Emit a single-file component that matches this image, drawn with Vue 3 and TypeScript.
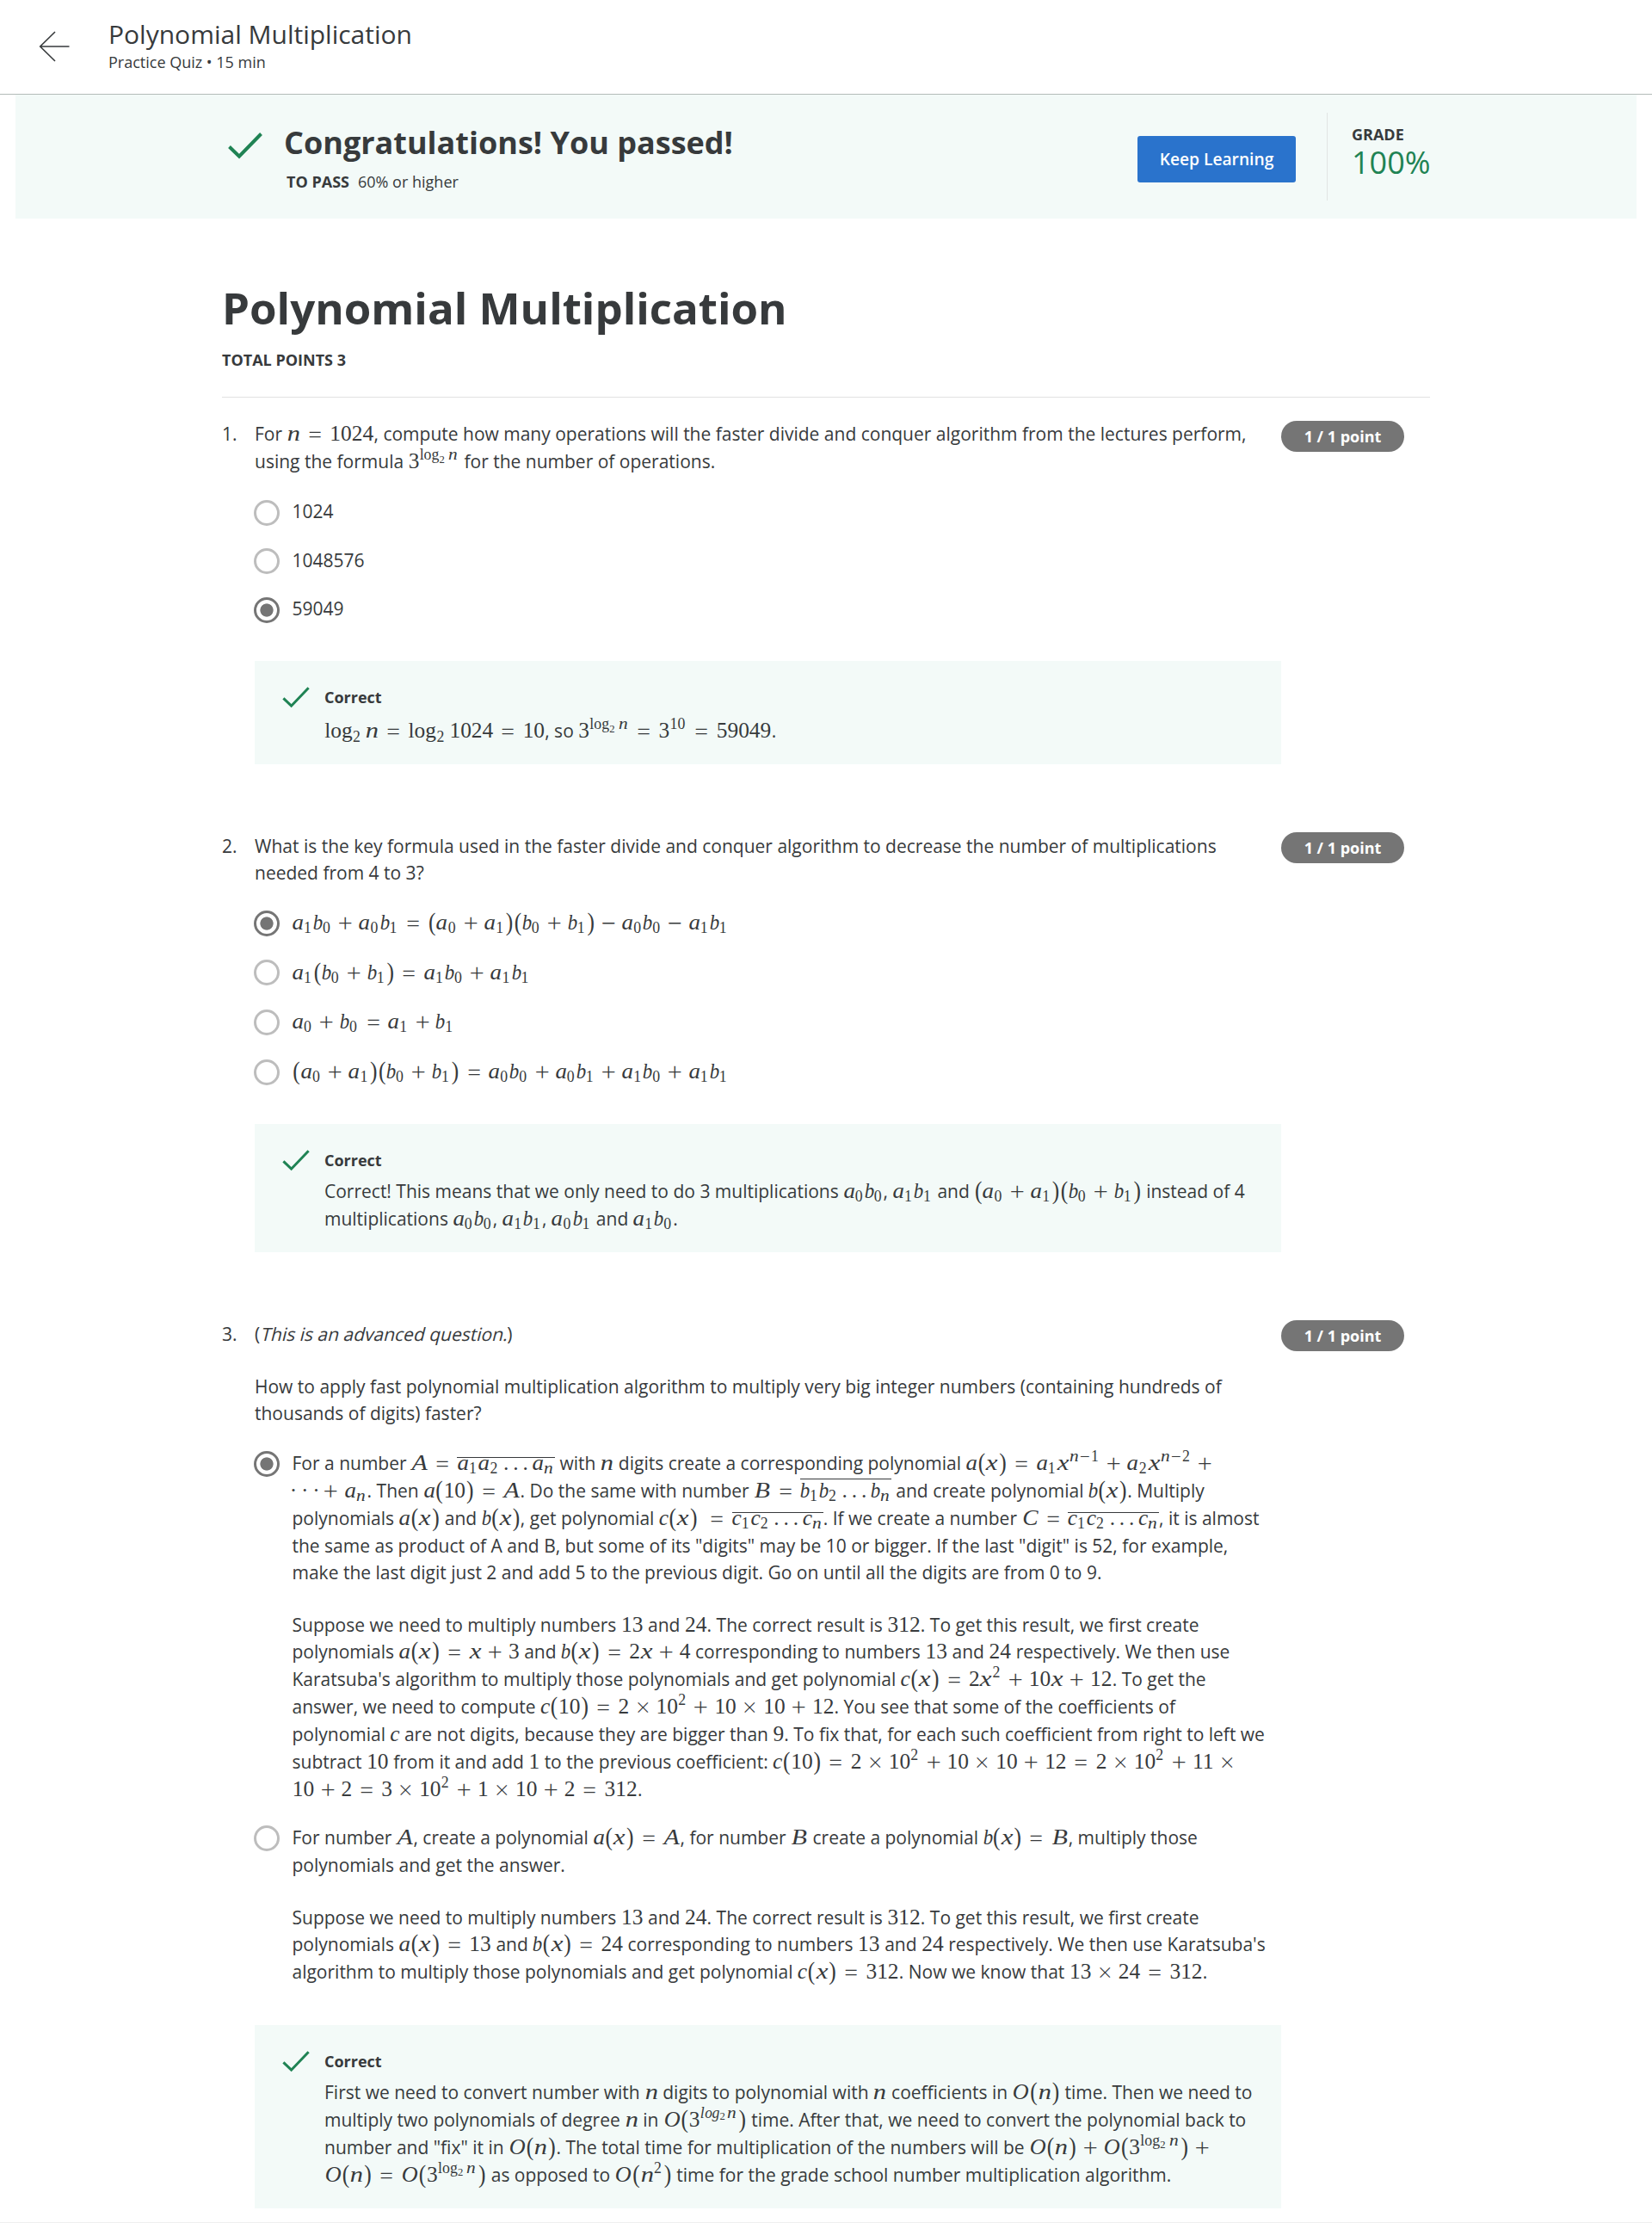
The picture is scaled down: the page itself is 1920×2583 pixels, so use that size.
<script setup lang="ts">
interface Atom {
  t: string
  kind: string
  w: number
  scale: number
  size: number
  raise: number
  ml: number
  mr: number
}
interface Segment {
  type: 'text' | 'em' | 'math' | 'bar'
  text: string
  high: boolean
  atoms: Atom[]
}
interface Line {
  tall: boolean
  segments: Segment[]
}
type Block = Line[]
interface Option {
  checked: boolean
  body: Block[]
}
interface Question {
  id: number
  kind: string
  prompt: Block[]
  options: Option[]
  feedback: Block[]
}

// [advance width, horizontal stretch] of the math letters, in em
const letters: Record<string, [number, number]> = {
  a: [0.529, 1.06], b: [0.429, 0.9], c: [0.433, 1], n: [0.615, 1.2], x: [0.575, 1.22],
  A: [0.77, 1.18], B: [0.79, 1.17], C: [0.77, 1.08], O: [0.785, 1.03],
  l: [0.298, 1], o: [0.485, 0.97], g: [0.5, 1],
}

function parseMath(src: string, size = 1, raise = 0): Atom[] {
  const out: Atom[] = []
  let i = 0
  const push = (t: string, kind: string, w: number, scale = 1, gap = 0) => {
    out.push({ t, kind, w, scale, size, raise, ml: size === 1 ? gap : 0, mr: size === 1 ? gap : 0 })
  }
  const argument = (): string => {
    if (src[i] === '{') {
      const end = src.indexOf('}', i)
      const inner = src.slice(i + 1, end)
      i = end + 1
      return inner
    }
    return src[i++]
  }
  while (i < src.length) {
    const rest = src.slice(i)
    const num = /^[0-9]+/.exec(rest)
    const ch = src[i]
    if (num) {
      push(num[0], 'num', 0.507 * num[0].length)
      i += num[0].length
    } else if (rest.startsWith('\\log')) {
      i += 4
      push('log', 'num', 1.3)
      if (src[i] === '_') {
        i++
        const small = size === 1 ? 0.7 : 0.5
        out.push(...parseMath(argument(), small, raise - (size === 1 ? 0.22 : 0.145)))
      }
      out[out.length - 1].mr = ((0.06 + 0.1667) * size) / out[out.length - 1].size
    } else if (rest.startsWith('\\ldots')) {
      i += 6
      push('...', 'dots', 1.167, 1, 0.1667)
    } else if (rest.startsWith('\\cdots')) {
      i += 6
      push('···', 'dots', 1.167)
    } else if (ch === '_' || ch === '^') {
      i++
      const small = size === 1 ? 0.7 : 0.5
      const shift = ch === '^' ? 0.39 : size === 1 ? -0.15 : -0.1
      const inner = parseMath(argument(), small, raise + shift)
      inner[inner.length - 1].mr = 0.08 / small
      out.push(...inner)
    } else if (ch === '=') {
      i++
      push('=', 'eq', 0.778, 1, 0.2778)
    } else if (ch === '+' || ch === '-' || ch === '*') {
      i++
      push(ch === '+' ? '+' : ch === '-' ? '−' : '×', ch === '*' ? 'times' : 'bin', 0.778, 1, 0.2222)
      if (out.length === 1) out[0].ml = 0
    } else if (ch === '(' || ch === ')') {
      i++
      push(ch, 'paren', 0.389)
    } else {
      i++
      const m = letters[ch] ?? [0.5, 1]
      push(ch, 'var', m[0], m[1])
    }
  }
  return out
}

// $…$ math, |…| overlined math, ~…~ emphasis; a leading ! marks a tall line
function line(src: string): Line {
  const tall = src[0] === '!'
  const segments = (tall ? src.slice(1) : src)
    .split(/(\$[^$]*\$|\|[^|]*\||~[^~]*~)/)
    .filter((p) => p !== '')
    .map((p): Segment => {
      const inner = p.slice(1, -1)
      if (p[0] === '$') return { type: 'math', text: '', high: false, atoms: parseMath(inner) }
      if (p[0] === '|') return { type: 'bar', text: '', high: inner.includes('b'), atoms: parseMath(inner) }
      if (p[0] === '~') return { type: 'em', text: inner, high: false, atoms: [] }
      return { type: 'text', text: p, high: false, atoms: [] }
    })
  return { tall, segments }
}
const block = (...rows: string[]): Block => rows.map(line)

const questions: Question[] = [
  {
    id: 1,
    kind: 'plain',
    prompt: [
      block(
        '!For $n=1024$, compute how many operations will the faster divide and conquer algorithm from the lectures perform,',
        '!using the formula $3^{\\log_2n}$ for the number of operations.',
      ),
    ],
    options: [
      { checked: false, body: [block('1024')] },
      { checked: false, body: [block('1048576')] },
      { checked: true, body: [block('59049')] },
    ],
    feedback: [block('!$\\log_2n=\\log_21024=10$, so $3^{\\log_2n}=3^{10}=59049$.')],
  },
  {
    id: 2,
    kind: 'formula',
    prompt: [
      block(
        'What is the key formula used in the faster divide and conquer algorithm to decrease the number of multiplications',
        'needed from 4 to 3?',
      ),
    ],
    options: [
      { checked: true, body: [block('$a_1b_0+a_0b_1=(a_0+a_1)(b_0+b_1)-a_0b_0-a_1b_1$')] },
      { checked: false, body: [block('$a_1(b_0+b_1)=a_1b_0+a_1b_1$')] },
      { checked: false, body: [block('$a_0+b_0=a_1+b_1$')] },
      { checked: false, body: [block('$(a_0+a_1)(b_0+b_1)=a_0b_0+a_0b_1+a_1b_0+a_1b_1$')] },
    ],
    feedback: [
      block(
        '!Correct! This means that we only need to do 3 multiplications $a_0b_0$, $a_1b_1$ and $(a_0+a_1)(b_0+b_1)$ instead of 4',
        '!multiplications $a_0b_0$, $a_1b_1$, $a_0b_1$ and $a_1b_0$.',
      ),
    ],
  },
  {
    id: 3,
    kind: 'prose',
    prompt: [
      block('(~This is an advanced question.~)'),
      block(
        'How to apply fast polynomial multiplication algorithm to multiply very big integer numbers (containing hundreds of',
        'thousands of digits) faster?',
      ),
    ],
    options: [
      {
        checked: true,
        body: [
          block(
            '!For a number $A=$|a_1a_2\\ldotsa_n| with $n$ digits create a corresponding polynomial $a(x)=a_1x^{n-1}+a_2x^{n-2}+$',
            '!$\\cdots+a_n$. Then $a(10)=A$. Do the same with number $B=$|b_1b_2\\ldotsb_n| and create polynomial $b(x)$. Multiply',
            '!polynomials $a(x)$ and $b(x)$, get polynomial $c(x)$ $=$|c_1c_2\\ldotsc_n|. If we create a number $C=$|c_1c_2\\ldotsc_n|, it is almost',
            'the same as product of A and B, but some of its "digits" may be 10 or bigger. If the last "digit" is 52, for example,',
            'make the last digit just 2 and add 5 to the previous digit. Go on until all the digits are from 0 to 9.',
          ),
          block(
            'Suppose we need to multiply numbers $13$ and $24$. The correct result is $312$. To get this result, we first create',
            '!polynomials $a(x)=x+3$ and $b(x)=2x+4$ corresponding to numbers $13$ and $24$ respectively. We then use',
            '!Karatsuba\'s algorithm to multiply those polynomials and get polynomial $c(x)=2x^2+10x+12$. To get the',
            '!answer, we need to compute $c(10)=2*10^2+10*10+12$. You see that some of the coefficients of',
            '!polynomial $c$ are not digits, because they are bigger than $9$. To fix that, for each such coefficient from right to left we',
            '!subtract $10$ from it and add $1$ to the previous coefficient: $c(10)=2*10^2+10*10+12=2*10^2+11*$',
            '$10+2=3*10^2+1*10+2=312$.',
          ),
        ],
      },
      {
        checked: false,
        body: [
          block(
            '!For number $A$, create a polynomial $a(x)=A$, for number $B$ create a polynomial $b(x)=B$, multiply those',
            'polynomials and get the answer.',
          ),
          block(
            'Suppose we need to multiply numbers $13$ and $24$. The correct result is $312$. To get this result, we first create',
            '!polynomials $a(x)=13$ and $b(x)=24$ corresponding to numbers $13$ and $24$ respectively. We then use Karatsuba\'s',
            '!algorithm to multiply those polynomials and get polynomial $c(x)=312$. Now we know that $13*24=312$.',
          ),
        ],
      },
    ],
    feedback: [
      block(
        '!First we need to convert number with $n$ digits to polynomial with $n$ coefficients in $O(n)$ time. Then we need to',
        '!multiply two polynomials of degree $n$ in $O(3^{log_2n})$ time. After that, we need to convert the polynomial back to',
        '!number and "fix" it in $O(n)$. The total time for multiplication of the numbers will be $O(n)+O(3^{\\log_2n})+$',
        '!$O(n)=O(3^{\\log_2n})$ as opposed to $O(n^2)$ time for the grade school number multiplication algorithm.',
      ),
    ],
  },
]

function boxStyle(a: Atom) {
  return {
    fontSize: `${a.size}em`,
    width: `${a.w}em`,
    verticalAlign: `${a.raise / a.size}em`,
    marginLeft: `${a.ml}em`,
    marginRight: `${a.mr}em`,
    '--sx': a.scale,
  }
}
</script>

<template>
  <div class="page">
    <header class="top">
      <svg class="back" width="36" height="36" viewBox="0 0 36 36" fill="none" stroke="#373a3c" stroke-width="1.6">
        <path d="M35.5 18H1.7M19 1L1.7 18l17.3 17" />
      </svg>
      <div class="top-text">
        <div class="top-title">Polynomial Multiplication</div>
        <div class="top-sub">Practice Quiz • 15 min</div>
      </div>
    </header>

    <section class="banner">
      <svg class="banner-check" width="40" height="31" viewBox="0 0 40 31" fill="none" stroke="#1f8354" stroke-width="4">
        <path d="M1.5 16.5L13 27.6 38.5 1.5" />
      </svg>
      <div class="banner-text">
        <div class="banner-title">Congratulations! You passed!</div>
        <div class="banner-sub"><b>TO PASS</b><span>60% or higher</span></div>
      </div>
      <button class="keep" type="button">Keep Learning</button>
      <div class="grade">
        <div class="grade-label">GRADE</div>
        <div class="grade-value">100%</div>
      </div>
    </section>

    <main class="quiz">
      <h1>Polynomial Multiplication</h1>
      <div class="total">TOTAL POINTS 3</div>
      <hr />

      <article v-for="q in questions" :key="q.id" class="question" :class="q.kind">
        <div class="num">{{ q.id }}.</div>
        <div class="content">
          <div class="prompt">
            <div v-for="(b, bi) in q.prompt" :key="bi" class="block">
              <div v-for="(l, li) in b" :key="li" class="line" :class="{ tall: l.tall }"><template v-for="(s, si) in l.segments" :key="si"><template v-if="s.type === 'text'">{{ s.text }}</template><em v-else-if="s.type === 'em'">{{ s.text }}</em><span v-else class="math"><span v-for="(a, ai) in s.atoms" :key="ai" class="atom" :class="a.kind" :style="boxStyle(a)"><span class="glyph">{{ a.t }}</span></span></span></template></div>
            </div>
          </div>
          <div class="options">
            <div v-for="(o, oi) in q.options" :key="oi" class="option">
              <span class="radio" :class="{ on: o.checked }"></span>
              <div class="option-body">
                <div v-for="(b, bi) in o.body" :key="bi" class="block">
                  <div v-for="(l, li) in b" :key="li" class="line" :class="{ tall: l.tall }"><template v-for="(s, si) in l.segments" :key="si"><template v-if="s.type === 'text'">{{ s.text }}</template><span v-else class="math" :class="{ bar: s.type === 'bar', high: s.high }"><span v-for="(a, ai) in s.atoms" :key="ai" class="atom" :class="a.kind" :style="boxStyle(a)"><span class="glyph">{{ a.t }}</span></span></span></template></div>
                </div>
              </div>
            </div>
          </div>
          <div class="feedback">
            <svg class="check" width="32" height="25" viewBox="0 0 32 25" fill="none" stroke="#1f8354" stroke-width="3">
              <path d="M1.4 13.4L10.6 22.2 30.6 1.2" />
            </svg>
            <div>
              <div class="correct">Correct</div>
              <div v-for="(b, bi) in q.feedback" :key="bi" class="block">
                <div v-for="(l, li) in b" :key="li" class="line" :class="{ tall: l.tall }"><template v-for="(s, si) in l.segments" :key="si"><template v-if="s.type === 'text'">{{ s.text }}</template><span v-else class="math"><span v-for="(a, ai) in s.atoms" :key="ai" class="atom" :class="a.kind" :style="boxStyle(a)"><span class="glyph">{{ a.t }}</span></span></span></template></div>
              </div>
            </div>
          </div>
        </div>
        <div class="points">1 / 1 point</div>
      </article>
    </main>
    <footer class="foot"></footer>
  </div>
</template>

<style>
html,
body {
  background: #fff;
}
</style>

<style scoped>
.page {
  width: 1920px;
  height: 2583px;
  overflow: hidden;
  background: #fff;
  color: #373a3c;
  font-family: 'Open Sans', 'Noto Sans', sans-serif;
  font-size: 21px;
}
.top {
  display: flex;
  height: 109px;
  border-bottom: 1px solid #b3bbb8;
}
.back {
  margin: 36px 0 0 45px;
}
.top-text {
  margin: 18px 0 0 45px;
}
.top-title {
  font-size: 30px;
  line-height: 43px;
  white-space: nowrap;
}
.top-sub {
  margin-top: -1px;
  font-size: 18px;
  line-height: 24px;
}
.banner {
  display: flex;
  margin: 0 18px;
  height: 144px;
  background: #f3faf8;
}
.banner-check {
  margin: 44px 0 0 247px;
}
.banner-text {
  margin: 31px 0 0 25px;
  width: 992px;
  white-space: nowrap;
}
.banner-title {
  font-size: 36px;
  line-height: 50px;
  font-weight: 700;
}
.banner-sub {
  display: flex;
  gap: 10px;
  margin: 7px 0 0 3px;
  font-size: 18px;
  line-height: 27px;
}
.keep {
  width: 184px;
  height: 54px;
  margin: 48px 36px 0 0;
  padding: 0;
  border: 0;
  border-radius: 3px;
  background: #2a73cc;
  color: #fff;
  font: 600 19.2px/54px 'Open Sans', sans-serif;
  white-space: nowrap;
}
.grade {
  height: 102px;
  margin-top: 21px;
  padding-left: 28px;
  border-left: 1px solid #e1e5e4;
}
.grade-label {
  margin-top: 12px;
  font-size: 18px;
  line-height: 27px;
  font-weight: 700;
}
.grade-value {
  font-size: 36px;
  line-height: 38px;
  color: #1f8354;
}
.quiz {
  margin-left: 258px;
  width: 1404px;
}
h1 {
  margin: 67px 0 0;
  font-size: 51px;
  line-height: 72px;
  font-weight: 700;
  white-space: nowrap;
}
.total {
  margin-top: 12px;
  font-size: 18px;
  line-height: 27px;
  font-weight: 700;
}
hr {
  margin: 29px 0 26px;
  border: 0;
  height: 1px;
  background: #e1e1e1;
}
.question {
  display: flex;
  margin-bottom: 79px;
}
.question:last-child {
  margin-bottom: 16px;
}
.num {
  width: 38px;
  height: 31px;
  line-height: 33px;
}
.content {
  width: 1193px;
}
.points {
  width: 143px;
  height: 36px;
  border-radius: 18px;
  background: #757575;
  color: #fff;
  font-size: 18px;
  font-weight: 700;
  line-height: 36px;
  text-align: center;
}
.plain .points {
  margin-top: 1px;
}
.block + .block {
  margin-top: 30px;
}
.line {
  height: 31px;
  line-height: 33px;
  white-space: pre;
}
.line.tall {
  height: 32px;
}
em {
  display: inline-block;
  font-style: normal;
  transform: skewX(-14deg);
  transform-origin: left 76%;
}
.options {
  margin-top: 26px;
  margin-bottom: 21px;
}
.option {
  display: flex;
  padding-bottom: 25px;
}
.plain .option-body {
  padding-top: 0.3px;
}
.formula .option-body {
  padding-top: 1.3px;
}
.formula .option {
  padding-bottom: 25.3px;
}
.prose .option-body {
  padding-top: 1px;
}
.prose .option {
  padding-bottom: 24.2px;
}
.radio {
  box-sizing: border-box;
  flex: none;
  width: 30px;
  height: 30px;
  margin: 3px 15px -10px -1.5px;
  border: 3px solid #bdbdbd;
  border-radius: 50%;
}
.radio.on {
  border-color: #757575;
  background: radial-gradient(circle, #757575 7.2px, transparent 8px);
}
.feedback {
  display: flex;
  padding: 28px 0 23px 32px;
  background: #f3faf8;
}
.check {
  flex: none;
  margin: 2px 17px 0 0;
}
.correct {
  margin: 1px 0 6px;
  font-size: 18px;
  line-height: 27px;
  font-weight: 700;
}
.plain .correct {
  margin-bottom: 9px;
}
.foot {
  height: 1px;
  background: #efefef;
}
.math {
  display: inline-block;
  font-family: 'Liberation Serif', serif;
  font-size: 25.41px;
  line-height: 0;
}
.bar {
  padding-top: 0.21em;
  border-top: 1px solid #373a3c;
}
.bar.high {
  padding-top: 0.48em;
}
.atom {
  display: inline-flex;
  justify-content: center;
  line-height: 0;
}
.glyph {
  display: block;
  transform: scaleX(var(--sx));
  transform-origin: center calc(50% + 0.09em);
}
.var .glyph {
  font-style: italic;
}
.paren .glyph {
  transform: scaleY(1.17);
}
.bin .glyph,
.eq .glyph,
.times .glyph {
  font-family: 'Inter', sans-serif;
  font-weight: 200;
}
.bin .glyph {
  transform: scale(1.28);
}
.eq .glyph {
  transform: scale(1.36, 1.1);
}
.times .glyph {
  transform: scale(1.1);
}
.dots .glyph {
  letter-spacing: 0.19em;
  margin-right: -0.19em;
}
</style>
